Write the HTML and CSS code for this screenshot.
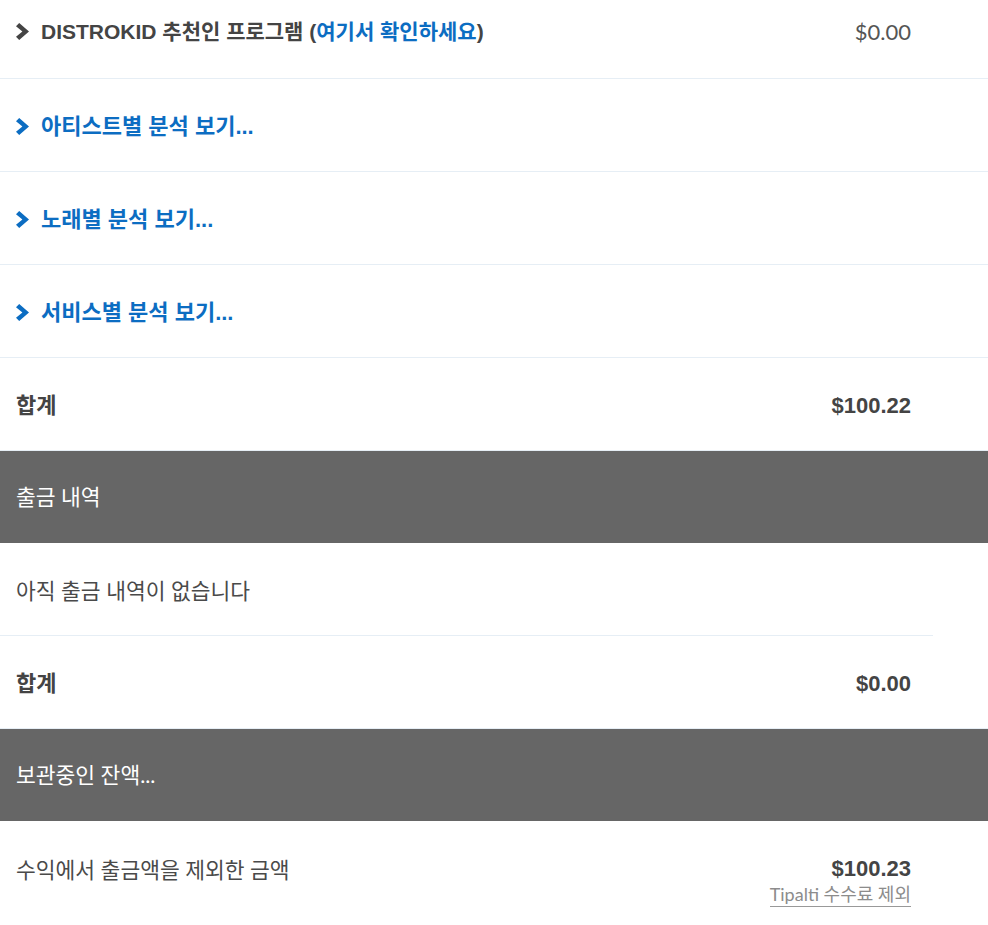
FILE: index.html
```html
<!DOCTYPE html>
<html lang="ko">
<head>
<meta charset="utf-8">
<title>DistroKid</title>
<link rel="stylesheet" href="styles.css">
</head>
<body>
<div class="page">
  <div class="row row-first">
    <div class="label strong referral"><svg class="chev" viewBox="0 0 13 17"><path d="M0 3.3 L3.2 0 L13 8.5 L3.2 17 L0 13.7 L6.4 8.5 Z"/></svg>DISTROKID 추천인 프로그램 (<a class="link" href="#">여기서 확인하세요</a>)</div>
    <div class="amount">$0.00</div>
  </div>
  <div class="row">
    <a class="label link" href="#"><svg class="chev" viewBox="0 0 13 17"><path d="M0 3.3 L3.2 0 L13 8.5 L3.2 17 L0 13.7 L6.4 8.5 Z"/></svg>아티스트별 분석 보기...</a>
  </div>
  <div class="row">
    <a class="label link" href="#"><svg class="chev" viewBox="0 0 13 17"><path d="M0 3.3 L3.2 0 L13 8.5 L3.2 17 L0 13.7 L6.4 8.5 Z"/></svg>노래별 분석 보기...</a>
  </div>
  <div class="row">
    <a class="label link" href="#"><svg class="chev" viewBox="0 0 13 17"><path d="M0 3.3 L3.2 0 L13 8.5 L3.2 17 L0 13.7 L6.4 8.5 Z"/></svg>서비스별 분석 보기...</a>
  </div>
  <div class="row">
    <div class="label strong">합계</div>
    <div class="amount strong-amount">$100.22</div>
  </div>
  <div class="band">출금 내역</div>
  <div class="row row-short">
    <div class="label">아직 출금 내역이 없습니다</div>
  </div>
  <div class="row">
    <div class="label strong">합계</div>
    <div class="amount strong-amount">$0.00</div>
  </div>
  <div class="band">보관중인 잔액...</div>
  <div class="row row-last">
    <div class="label">수익에서 출금액을 제외한 금액</div>
    <div class="amount-stack">
      <div class="amount strong-amount">$100.23</div>
      <a class="note" href="#">Tipalti 수수료 제외</a>
    </div>
  </div>
</div>
</body>
</html>
```

FILE: styles.css
```css
html, body {
  margin: 0;
  padding: 0;
  background: #ffffff;
}

body {
  font-family: "Lato", "Noto Sans CJK KR", sans-serif;
  font-size: 21.5px;
  color: #4a4a4a;
  overflow: hidden;
}

.page {
  width: 988px;
}

.row {
  display: flex;
  justify-content: space-between;
  align-items: center;
  height: 88px;
  padding: 4px 77px 0 16px;
  border-bottom: 1px solid #e6eef5;
}

.row-first {
  margin-top: -14px;
  padding-top: 0;
  height: 92px;
}

.row-short {
  margin-right: 55px;
  padding-right: 22px;
}

.row-last {
  align-items: flex-start;
  border-bottom: none;
  height: auto;
  padding-top: 34px;
  padding-bottom: 20px;
}

.label {
  display: block;
  line-height: 30px;
  white-space: nowrap;
}

.strong {
  font-family: "Liberation Sans", "Noto Sans CJK KR", sans-serif;
  font-size: 22px;
  font-weight: 700;
  color: #444444;
}

.referral {
  font-size: 21px;
}

.link {
  font-family: "Liberation Sans", "Noto Sans CJK KR", sans-serif;
  font-size: 22px;
  font-weight: 700;
  color: #0c6dc2;
  text-decoration: none;
}

.referral .link {
  font-size: 21px;
}

.chev {
  display: inline-block;
  width: 13px;
  height: 17px;
  margin-right: 12px;
  vertical-align: -1px;
  fill: currentColor;
}

.amount {
  font-family: "Lato", "Noto Sans CJK KR", sans-serif;
  font-size: 22px;
  color: #555555;
  line-height: 28px;
}

.strong-amount {
  font-family: "Liberation Sans", sans-serif;
  font-weight: 700;
  color: #444444;
}

.amount-stack {
  display: flex;
  flex-direction: column;
  align-items: flex-end;
}

.note {
  font-family: "Lato", "Noto Sans CJK KR", sans-serif;
  font-size: 18px;
  color: #8c8c8c;
  text-decoration: none;
  border-bottom: 1px solid #999999;
  line-height: 23px;
}

.band {
  display: flex;
  align-items: center;
  height: 92px;
  padding: 0 16px;
  background: #666666;
  color: #ffffff;
  line-height: 30px;
}
```
